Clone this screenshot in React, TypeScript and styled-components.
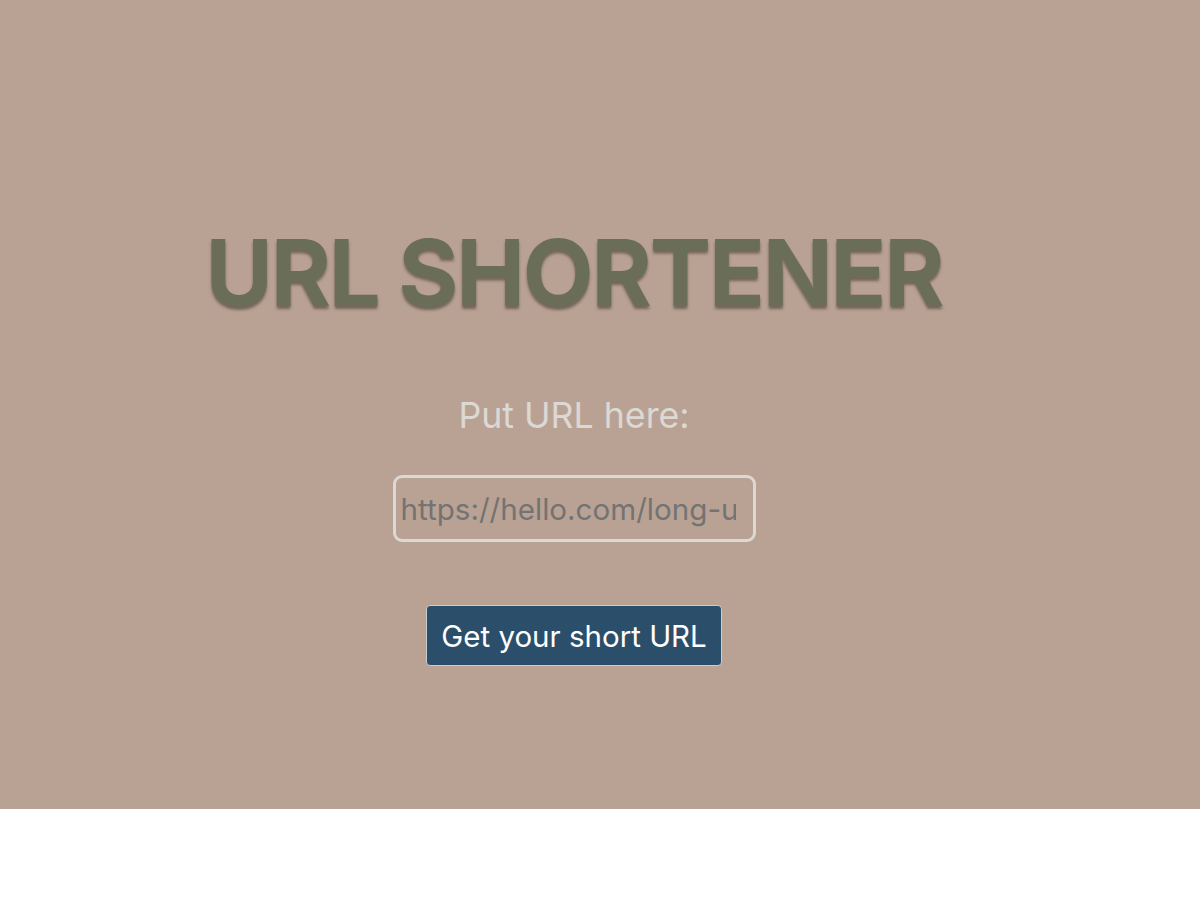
import React from "react";
import styled, { createGlobalStyle } from "styled-components";

const Global = createGlobalStyle`
  html, body { margin: 0; padding: 0; background: #ffffff; }
  body { font-family: Inter, "Liberation Sans", Arial, sans-serif; }
`;

const Page = styled.main`
  height: 809px;
  background: #b9a294;
  display: flex;
  flex-direction: column;
  align-items: center;
  padding: 227px 52px 0 0;
  box-sizing: border-box;
`;

const Title = styled.h1`
  margin: 0;
  font-family: Inter, "Liberation Sans", sans-serif;
  font-weight: 700;
  font-size: 92px;
  line-height: 92px;
  color: #6a6e58;
  text-shadow: 0 3px 3px rgba(60, 50, 40, 0.55);
  letter-spacing: -2.2px;
`;

const Form = styled.form`
  display: flex;
  flex-direction: column;
  align-items: center;
  margin-top: 78px;
`;

const Label = styled.label`
  font-family: Inter, "Liberation Sans", sans-serif;
  font-size: 35.7px;
  line-height: 36px;
  color: #dcd8d4;
`;

const Input = styled.input`
  margin-top: 42px;
  width: 363px;
  height: 67px;
  box-sizing: border-box;
  border: 3px solid #dcd8d4;
  border-radius: 9px;
  background: transparent;
  padding: 0 17px 0 5px;
  font-family: Inter, "Liberation Sans", sans-serif;
  font-size: 29.6px;
  color: #333;
  outline: none;
  &::placeholder { color: #737373; }
`;

const Button = styled.button`
  margin-top: 63px;
  width: 296px;
  height: 61px;
  box-sizing: border-box;
  background: #2b4f6b;
  border: 1px solid #c9ccd0;
  border-radius: 4px;
  color: #ffffff;
  font-family: Inter, "Liberation Sans", sans-serif;
  font-size: 29.5px;
  cursor: pointer;
`;

export default function App() {
  return (
    <>
      <Global />
      <Page>
        <Title>URL SHORTENER</Title>
        <Form onSubmit={(e) => e.preventDefault()}>
          <Label htmlFor="url">Put URL here:</Label>
          <Input id="url" type="text" placeholder="https://hello.com/long-url" />
          <Button type="submit">Get your short URL</Button>
        </Form>
      </Page>
    </>
  );
}
